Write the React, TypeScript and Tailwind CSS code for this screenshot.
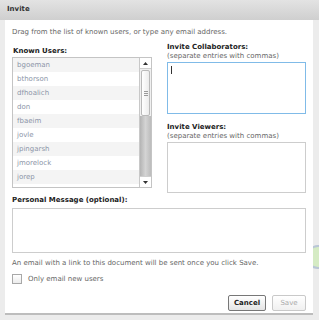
import React from "react";

const users = [
  "bgoeman",
  "bthorson",
  "dfhoalich",
  "don",
  "fbaeim",
  "jovle",
  "jpingarsh",
  "jmorelock",
  "jorep",
  "kbeauchamp",
];

const font = { fontFamily: '"DejaVu Sans", Verdana, sans-serif' };

function Scrollbar() {
  return (
    <div className="flex w-[12px] flex-col border-l border-[#c8c8c8] bg-[#f0f0f0]">
      <div className="flex h-[11px] items-center justify-center border-b border-[#cfcfcf] bg-white">
        <svg width="5" height="3" viewBox="0 0 5 3">
          <path d="M2.5 0 L5 3 L0 3 Z" fill="#333" />
        </svg>
      </div>
      <div className="mx-px mt-px flex h-[46px] flex-col items-center justify-center rounded-[2px] border border-[#b9b9b9] bg-gradient-to-r from-white to-[#ececec]">
        <div className="flex flex-col gap-px">
          <div className="h-px w-[4px] bg-[#9a9a9a]" />
          <div className="h-px w-[4px] bg-[#9a9a9a]" />
          <div className="h-px w-[4px] bg-[#9a9a9a]" />
        </div>
      </div>
      <div className="flex-1 bg-gradient-to-r from-[#b4b4b4] via-[#d4d4d4] to-[#bcbcbc]" />
      <div className="flex h-[11px] items-center justify-center border-t border-[#cfcfcf] bg-white">
        <svg width="5" height="3" viewBox="0 0 5 3">
          <path d="M0 0 L5 0 L2.5 3 Z" fill="#333" />
        </svg>
      </div>
    </div>
  );
}

export default function App() {
  return (
    <div
      className="relative h-[320px] w-[319px] overflow-hidden bg-[#ececec] text-[7px] text-[#444]"
      style={font}
    >
      <div className="absolute left-[306px] top-[245px] h-[24px] w-[24px] rounded-full border-2 border-[#b9c6d6] bg-[#d5ebc4]" />
      <div className="relative flex h-[20px] items-center bg-gradient-to-b from-[#e3e3e3] to-[#cfcfcf] pb-px pl-[7px] font-bold text-[#333]">
        Invite
      </div>
      <div className="relative ml-[5px] mr-[6px] flex h-[293px] flex-col bg-white px-[7px] pt-[8px] shadow-[0_2px_0_#bdbdbd]">
        <div className="h-[9px] leading-[9px] text-[#666]">
          Drag from the list of known users, or type any email address.
        </div>
        <div className="mt-[6px] flex gap-[15px]">
          <div className="flex w-[140px] flex-col">
            <div className="h-[10px] pl-px pt-[4px] font-bold leading-[9px] text-[#222]">Known Users:</div>
            <div className="mt-[4px] flex h-[131px] border border-[#c4c4c4]">
              <div className="flex flex-1 flex-col overflow-hidden">
                {users.map((u, i) => (
                  <div
                    key={u}
                    className={`h-[14px] shrink-0 pl-[4px] leading-[14px] text-[#8c95a8] ${i % 2 === 0 ? "bg-[#f4f4f4]" : "bg-white"}`}
                  >
                    {u}
                  </div>
                ))}
              </div>
              <Scrollbar />
            </div>
          </div>
          <div className="flex flex-1 flex-col">
            <div className="font-bold leading-[9px] text-[#222]">Invite Collaborators:</div>
            <div className="leading-[9px] text-[#666]">(separate entries with commas)</div>
            <div className="mt-[1px] h-[52px] border border-[#80bbe8] p-[2px]">
              <div className="ml-px mt-px h-[8px] w-px bg-[#333]" />
            </div>
            <div className="mt-[9px] font-bold leading-[9px] text-[#222]">Invite Viewers:</div>
            <div className="leading-[9px] text-[#666]">(separate entries with commas)</div>
            <div className="mt-[1px] h-[51px] border border-[#cdcdcd]" />
          </div>
        </div>
        <div className="mt-[3px] font-bold leading-[9px] text-[#222]">Personal Message (optional):</div>
        <div className="mt-[3px] h-[45px] border border-[#cdcdcd]" />
        <div className="mt-[6px] leading-[9px] text-[#666]">
          An email with a link to this document will be sent once you click Save.
        </div>
        <div className="mt-[6px] flex items-center gap-[6px]">
          <div className="h-[10px] w-[10px] border border-[#a8a8a8] bg-gradient-to-b from-white to-[#ececec]" />
          <span className="text-[#666]">Only email new users</span>
        </div>
        <div className="mt-auto mb-[2px] flex justify-end gap-[6px]">
          <button className="h-[16px] w-[38px] rounded-[2px] border border-[#777] bg-gradient-to-b from-white to-[#e4e4e4] font-bold text-[#222]">
            Cancel
          </button>
          <button className="h-[16px] w-[34px] rounded-[2px] border border-[#c9c9c9] bg-gradient-to-b from-white to-[#f0f0f0] text-[#aaa]">
            Save
          </button>
        </div>
      </div>
    </div>
  );
}
